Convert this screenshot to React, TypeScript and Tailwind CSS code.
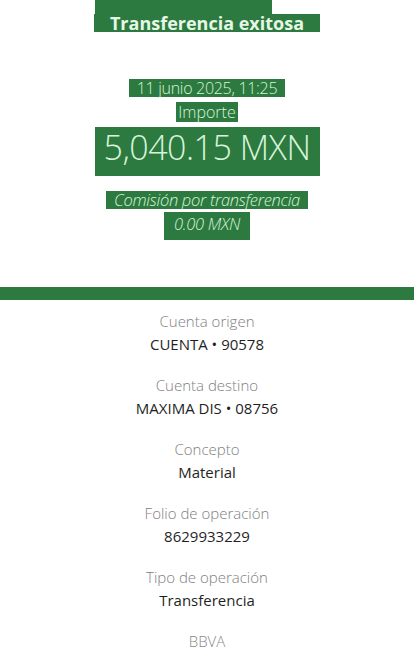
import React from 'react';

const details = [
  { label: 'Cuenta origen', value: 'CUENTA • 90578' },
  { label: 'Cuenta destino', value: 'MAXIMA DIS • 08756' },
  { label: 'Concepto', value: 'Material' },
  { label: 'Folio de operación', value: '8629933229' },
  { label: 'Tipo de operación', value: 'Transferencia' },
];

export default function App() {
  return (
    <div className="w-[414px] h-[661px] overflow-hidden bg-white flex flex-col items-center" style={{ fontFamily: '"Open Sans", sans-serif' }}>
      {/* header highlights */}
      <div className="flex flex-col items-center w-full">
        <div className="h-[14px] w-[177px] bg-[#2c7a3f] self-start ml-[95px]" />
        <span className="bg-[#2c7a3f] text-[#e6f7e6] font-bold text-[18px] leading-[18px] w-[226px] text-center">
          Transferencia exitosa
        </span>
      </div>

      <span className="mt-[47px] bg-[#2c7a3f] text-[#d8f3da] font-light text-[16px] leading-[18px] px-[8px] tracking-[-0.3px]">
        11 junio 2025, 11:25
      </span>
      <span className="mt-[5px] bg-[#2c7a3f] text-[#d8f3da] font-light text-[16px] leading-[20px] px-[2px]">
        Importe
      </span>
      <span className="mt-[5px] bg-[#2c7a3f] text-[#d8f3da] font-light text-[34px] leading-[40px] pb-[9px] w-[225px] text-center tracking-[-0.5px]">
        5,040.15 MXN
      </span>

      <span className="mt-[15px] bg-[#2c7a3f] text-[#d8f3da] font-light italic text-[16.5px] leading-[18px] px-[8px] tracking-[-0.3px]">
        Comisión por transferencia
      </span>
      <span className="mt-[3px] bg-[#2c7a3f] text-[#d8f3da] font-light italic text-[16.5px] leading-[24px] pb-[4px] px-[10px] tracking-[-0.3px]">
        0.00 MXN
      </span>

      <div className="mt-[47px] h-[13px] w-full bg-[#2c7a3f]" />

      <div className="flex flex-col items-center gap-[18px] mt-[10px]">
        {details.map((d) => (
          <div key={d.label} className="flex flex-col items-center">
            <span className="text-[#808080] text-[15px] leading-[22px] font-light">{d.label}</span>
            <span className="text-[#1f1f1f] text-[15px] leading-[24px]">{d.value}</span>
          </div>
        ))}
        <span className="text-[#888] text-[15px] leading-[22px] font-light">BBVA</span>
      </div>
    </div>
  );
}
